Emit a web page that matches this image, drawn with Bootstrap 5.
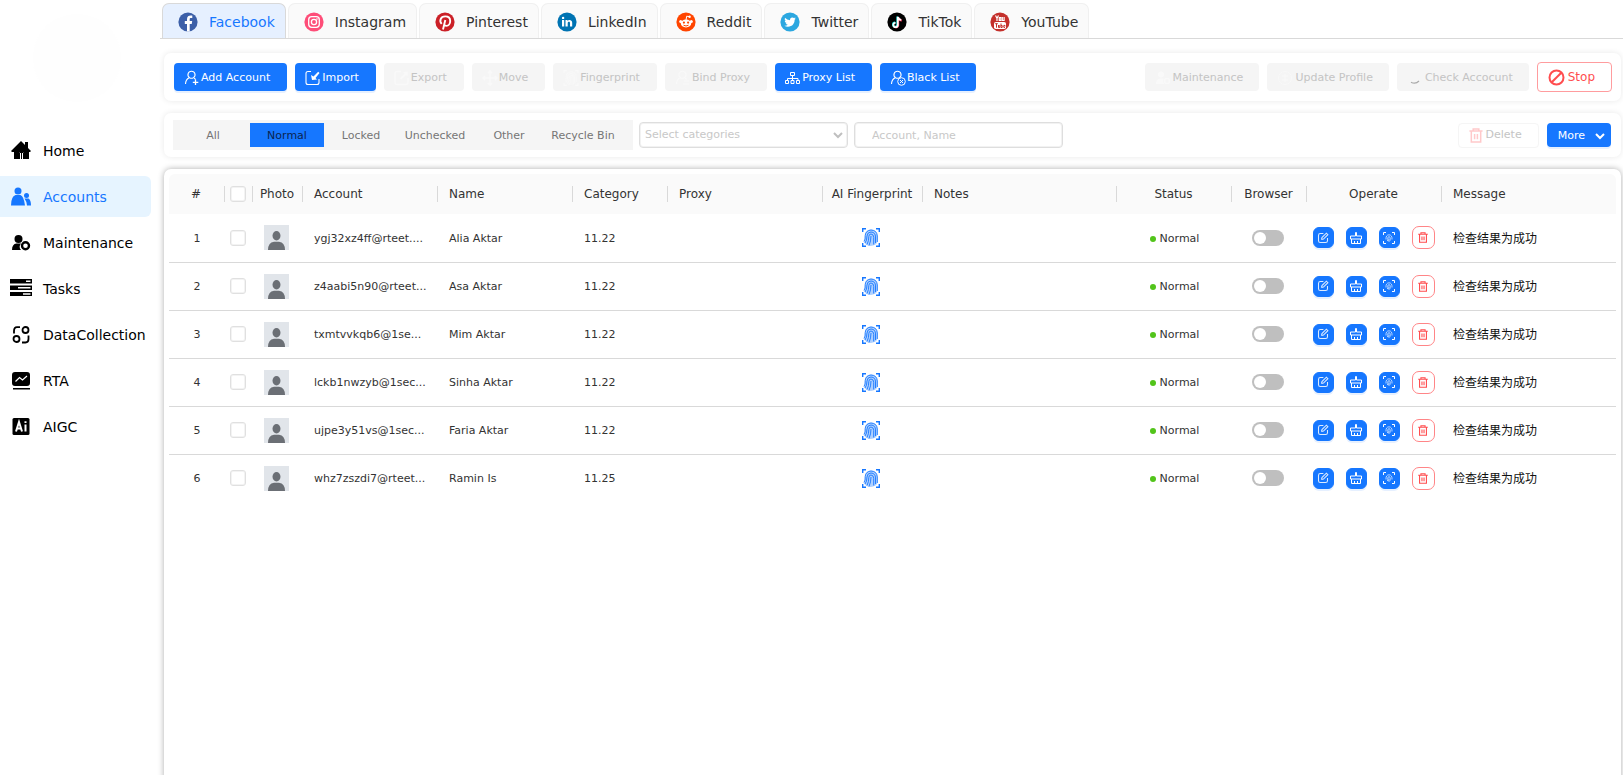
<!DOCTYPE html>
<html lang="en">
<head>
<meta charset="utf-8">
<meta name="viewport" content="width=device-width, initial-scale=1">
<title>Accounts</title>
<link rel="stylesheet" href="https://cdn.jsdelivr.net/npm/bootstrap@5.3.0/dist/css/bootstrap.min.css">
<style>
:root { --blue: #1677ff; }
body { font-family: "DejaVu Sans", "Noto Sans CJK SC", sans-serif; font-size: 11px; line-height: 16px; color: #333; background: #fff; }
svg { display: block; flex: none; }
.side { width: 160px; flex: none; }
.avatar-blank { width: 88px; height: 88px; margin: 14px 0 28px 33px; border-radius: 50%; background: #fefefe; }
.side-link { height: 41px; width: 151px; padding-left: 10px; gap: 11px; border-radius: 0 6px 6px 0; color: #000; font-size: 14px; text-decoration: none; white-space: nowrap; }
.side-link.active { background: #e6f4ff; color: var(--blue); }
.side-nav { gap: 5px; }
.content-col { min-width: 0; }
.site-tabs { padding: 3px 2px 0; border-bottom: 1px solid #d9d9d9; gap: 2px; }
.site-tabs .nav-link { height: 35px; padding: 2px 10px 0 15px; gap: 11px; border: 1px solid #f0f0f0; border-bottom: 0; border-radius: 7px 7px 0 0; background: #fafafa; color: #333; font-size: 14px; }
.site-tabs .nav-link.active { background: #e6f0ff; border-color: #d9d9d9; color: var(--blue); }
.main-area { padding: 14px 2px 0 4px; gap: 12px; }
.panel { background: #fff; border-radius: 7px; box-shadow: 0 0 6px rgba(0,0,0,.09); }
.panel-tools { padding: 9px 9px 9px 10px; }
.panel-filter { padding: 7px 10px 7px 9px; }
.panel-grid { box-shadow: 0 0 6px rgba(0,0,0,.32); padding: 5px 5px 0; margin-bottom: -10px; }
.tool { height: 28px; padding: 1px 17px 0 10px; gap: 1px; border: 0; border-radius: 4px; font-size: 11px; line-height: 16px; white-space: nowrap; display: flex; align-items: center; }
.tool.btn-primary, .mini.btn-primary { background: var(--blue); border-color: var(--blue); box-shadow: 0 2px 0 #e6f0ff; }
.tool:disabled { background: #f5f5f5; color: #c4c4c4; opacity: 1; }
.tool:disabled svg { color: #f9f9f9; }
.tool .spin { color: #aaa !important; }
.tool-wide { padding-right: 16px; gap: 2px; }
.tool-stop { height: 30px; padding: 0 16px 0 10px; gap: 3px; border: 1px solid #ff9c9e; border-color: #ff9c9e; color: #ff4d4f; font-size: 12px; }
.tool-del:disabled { height: 25px; padding: 0 16px 0 9px; background: #fff; border: 1px solid #f5f5f5; gap: 2px; }
.tool-del:disabled svg { color: #ffc9ca; }
.tool-more { height: 24px; padding: 1px 6px 0 11px; gap: 10px; }
.seg { background: #f5f5f5; padding: 3px 13px 3px 3px; }
.seg label { width: 74px; height: 24px; padding-top: 1px; line-height: 23px; text-align: center; color: #757575; white-space: nowrap; }
.seg .btn-check:checked + label { background: var(--blue); color: #0a2450; }
.fields { gap: 6px; margin-left: 6px; }
.field { width: 209px; height: 26px; border: 1px solid #dedede; border-radius: 4px; box-shadow: inset 0 0 0 1px #f2f2f2; font-size: 11px; line-height: 16px; padding: 0 17px; color: #c8c8c8; background-color: #fff; }
.field::placeholder { color: #c8c8c8; }
select.field { padding: 0 20px 0 5px; background-size: 10px 10px; background-position: right 4px center; background-image: url("data:image/svg+xml,%3csvg xmlns='http://www.w3.org/2000/svg' viewBox='0 0 10 10'%3e%3cpath fill='none' stroke='%23bfbfbf' stroke-width='2' d='M1 3l4 4 4-4'/%3e%3c/svg%3e"); }
.grid { table-layout: fixed; width: 100%; min-width: 1300px; }
.grid th { height: 40px; padding: 0; background: #fafafa; font-size: 12px; font-weight: 400; white-space: nowrap; }
.grid th:first-child { border-radius: 6px 0 0 0; }
.grid th:last-child { border-radius: 0 6px 0 0; }
.grid th > div { height: 16px; line-height: 16px; padding-right: 1px; border-right: 1px solid #d9d9d9; display: flex; justify-content: center; align-items: center; }
.grid th.first-left > div { justify-content: flex-start; padding-left: 11px; }
.grid th:last-child > div { border: 0; }
.grid td { height: 48px; padding: 2px 0 0; border-bottom: 1px solid #d9d9d9; white-space: nowrap; }
.grid tr:last-child td { border-bottom: 0; }
.grid td.txt { padding-left: 11px; }
.grid td.mid { padding: 0 4px 0 0; }
.grid td.mid-sm { padding: 0 2px 0 0; }
.grid td.msg { padding: 0 0 0 11px; font-family: "Noto Sans CJK SC", sans-serif; font-size: 12px; color: #111; }
.pick { width: 16px; height: 16px; margin: 0; border: 1px solid #e0e0e0; display: block; box-shadow: inset 0 0 0 1px #f3f3f3; }
.pick.form-check-input[type=checkbox] { border-radius: 3px; }
.photo { color: #6b6f75; }
.finger { color: var(--blue); }
.dot { width: 6px; height: 6px; border-radius: 50%; background: #52c41a; }
.toggle.form-check-input { width: 32px; height: 16px; margin: 0; border: 0; background-color: #bfbfbf; --bs-form-switch-bg: url("data:image/svg+xml,%3csvg xmlns='http://www.w3.org/2000/svg' viewBox='-8 -8 16 16'%3e%3ccircle r='6' fill='%23fff'/%3e%3c/svg%3e"); background-image: var(--bs-form-switch-bg); background-size: 16px 16px; }
.mini { width: 21px; height: 21px; padding: 0; border-radius: 6px; display: flex; align-items: center; justify-content: center; }
.mini-del { width: 23px; height: 23px; border: 1px solid #ff8587; color: #ff4d4f; border-radius: 7px; }
.ops { gap: 12px; }
</style>
</head>
<body>
<svg width="0" height="0" class="position-absolute" aria-hidden="true">
  <defs>
  <symbol id="i-finger" viewBox="0 0 18 19"><g fill="none" stroke="currentColor"><path stroke-width="1.4" d="M.7 4V.7H4M14 .7h3.300V4M17.300 15v3.300H14M4 18.300H.7V15"/><path fill="currentColor" fill-opacity=".35" stroke="none" d="M2 14q1-2 1-6 0-6 6-6.500 6 0 6.500 6.500v5q0 4-6.500 5-5 0-7-4"/><path stroke-width=".9" d="M2 13.500q1.500-2 1.200-6 .4-5 5.800-5.500 6 .3 6.300 6V14M3 15q2-2.500 2-7 .3-4 4-4 4.500.3 4.500 5V15M5 16.500q2-4 1.800-8Q7 6 9 6q2.700.2 2.700 3.500v7M7 17.500q2-4.500 2-9.500"/></g></symbol>
  <symbol id="i-scan" viewBox="0 0 12 12"><path fill="none" stroke="currentColor" d="M.5 3V.5H3M9 .5h2.500V3M11.500 9v2.500H9M3 11.500H.5V9"/><path fill="none" stroke="currentColor" stroke-opacity=".75" stroke-width=".9" d="M3 7.500q-.3-4.500 3-4.700 3.300.2 3 4.700M4.400 9q.6-1.500.4-3Q5 4.600 6 4.600q1.400.2 1.300 2Q7.200 8.500 6.500 9.500M6 6.500q0 1.500-.6 3"/></symbol>
  <symbol id="i-trash" viewBox="0 0 14 16"><path fill="none" stroke="currentColor" stroke-width="1.600" d="M0 3.300h14M4 3V1h6v2M2 3.500V15h10V3.500M5.500 6.500V12M8.500 6.500V12"/></symbol>
  <symbol id="i-edit" viewBox="0 0 16 16"><path fill="none" stroke="currentColor" stroke-opacity=".85" stroke-width="1.400" d="M8.500 2H4.500A2.500 2.500 0 0 0 2 4.500v7A2.500 2.500 0 0 0 4.500 14h7a2.500 2.500 0 0 0 2.500-2.500V8M6 10l.6-2.600L12.500 1.500l2 2L8.600 9.400 6 10"/></symbol>
  <symbol id="i-brush" viewBox="0 0 12 12"><path fill="none" stroke="currentColor" d="M5.500 4V.5h1V4h5v3H.5V4zM1.500 7v4.500h9V7M4.500 9v2.500M7.500 9v2.500"/></symbol>
  <symbol id="i-user" viewBox="0 0 16 16"><path fill="none" stroke="currentColor" stroke-width="1.100" d="M7.500 1.200a3.500 3.500 0 0 1 2 6.400q-.8.700-2 .7-1.200 0-2-.7a3.500 3.500 0 0 1 2-6.400M5.200 7.800Q1.700 9.500 1.500 14M10 8.300q1 .4 1.600 1.200"/></symbol>
  </defs>
</svg>
<div class="d-flex min-vh-100">
  <aside class="side">
    <div class="avatar-blank"></div>
    <nav class="side-nav d-flex flex-column" aria-label="Main">
      <a class="side-link d-flex align-items-center" href="#"><svg width="22" height="20" viewBox="0 0 22 20"><path fill="currentColor" d="M11 0l4 4V1h3v6l3 3-1 1h-1v7h-5v-7H9v7H4v-7H2l-1-1z"/><path fill="none" stroke="currentColor" d="M9.500 18v-6.500h4V18M11.500 12v6"/></svg>Home</a>
      <a class="side-link active d-flex align-items-center" href="#" aria-current="page"><svg width="22" height="20" viewBox="0 0 22 20"><g fill="currentColor"><circle cx="8" cy="4" r="3.500"/><circle cx="16.500" cy="8.500" r="2.500"/><path d="M1 18.500q0-9 4.500-10.500h5Q14 9.500 15 18.500zM14.500 11.500h4q2.500 1.500 2.500 7h-4q-.3-4-2.500-7"/></g></svg>Accounts</a>
      <a class="side-link d-flex align-items-center" href="#"><svg width="22" height="20" viewBox="0 0 22 20"><g fill="currentColor"><circle cx="8.500" cy="6" r="4"/><path d="M2 17q0-6 4.500-6.500h4.500a5 5 0 0 0 0 6.500z"/></g><circle cx="15.500" cy="12.800" r="3.500" fill="none" stroke="currentColor" stroke-width="2.400"/></svg>Maintenance</a>
      <a class="side-link d-flex align-items-center" href="#"><svg width="22" height="20" viewBox="0 0 22 20"><path fill="currentColor" d="M0 0h22v4.500H0zM0 6.500h22V11H0zM0 13h22v4H0z"/><path stroke="#fff" stroke-width="1.500" d="M16 2.200h4.500M8 8.700h12.500M13 15h7.500"/></svg>Tasks</a>
      <a class="side-link d-flex align-items-center" href="#"><svg width="22" height="20" viewBox="0 0 22 20"><g fill="none" stroke="currentColor" stroke-width="1.800"><circle cx="15.500" cy="5" r="3"/><circle cx="6.500" cy="14" r="3"/><path d="M4 8.500V6q0-3.800 3-3.800h3M18.500 10.500V14q0 3.500-3 3.500H12"/></g></svg>DataCollection</a>
      <a class="side-link d-flex align-items-center" href="#"><svg width="22" height="20" viewBox="0 0 22 20"><path fill="currentColor" d="M5 1h12q3 0 3 3v8q0 3-3 3H5q-3 0-3-3V4q0-3 3-3M3 17h17v1.500H3z"/><path fill="none" stroke="#fff" stroke-width="1.200" d="M5.500 10.500l4-4 3 2.500 4.500-4"/></svg>RTA</a>
      <a class="side-link d-flex align-items-center" href="#"><svg width="22" height="20" viewBox="0 0 22 20"><rect x="2.500" y="1" width="17" height="17" rx="1.500" fill="currentColor"/><path fill="none" stroke="#fff" stroke-width="2" d="M6 14.500l3-9.500 3 9.500M7 11.500h4M15.500 7.500v7M15.500 4.300v1.800"/></svg>AIGC</a>
    </nav>
  </aside>
  <div class="content-col flex-grow-1 d-flex flex-column">
    <nav class="site-tabs nav flex-nowrap" aria-label="Platforms">
      <a class="nav-link active d-flex align-items-center" href="#"><svg width="20" height="20" viewBox="0 0 20 20"><circle cx="10" cy="10" r="9.600" fill="#3c5fa8"/><path fill="#fff" d="M9 19.500V12H6.800V9H9V7.200C9 4.500 10.600 3.500 12.700 3.500c.8 0 1.600.1 1.600.1v2.500H13c-1 0-1.300.5-1.300 1.300V9h2.500l-.5 3h-2v7.500z"/></svg>Facebook</a>
      <a class="nav-link d-flex align-items-center" href="#"><svg width="20" height="20" viewBox="0 0 20 20"><circle cx="10" cy="10" r="9.600" fill="#fe4d78"/><g fill="none" stroke="#fff" stroke-width="1.300"><rect x="4.700" y="4.700" width="10.600" height="10.600" rx="3"/><circle cx="10" cy="10" r="2.600"/></g><circle cx="13" cy="7" r=".8" fill="#fff"/></svg>Instagram</a>
      <a class="nav-link d-flex align-items-center" href="#"><svg width="20" height="20" viewBox="0 0 20 20"><circle cx="10" cy="10" r="9.600" fill="#cb2027"/><path fill="none" stroke="#fff" stroke-width="1.900" d="M6.700 11.800C4 9 5.500 4.400 10.200 4.400c3.300 0 5 2 5 4.500 0 3-1.700 5-3.800 5-1.300 0-2-.7-2.200-1.200M10.300 8L8 17.500"/></svg>Pinterest</a>
      <a class="nav-link d-flex align-items-center" href="#"><svg width="20" height="20" viewBox="0 0 20 20"><circle cx="10" cy="10" r="9.600" fill="#0073b2"/><path fill="#fff" d="M5 8h2.200v6.500H5zM8.500 8h2v1c1-1.700 4.700-1.600 4.700 1.700v3.800H13v-3.400c0-2-2.300-1.700-2.300 0v3.400H8.500z"/><circle cx="6.100" cy="5.900" r="1.200" fill="#fff"/></svg>LinkedIn</a>
      <a class="nav-link d-flex align-items-center" href="#"><svg width="20" height="20" viewBox="0 0 20 20"><circle cx="10" cy="10" r="9.600" fill="#ff4500"/><g fill="#fff"><ellipse cx="10" cy="11.500" rx="5.200" ry="3.900"/><circle cx="4.700" cy="9.500" r="1.500"/><circle cx="15.300" cy="9.500" r="1.500"/><circle cx="13.600" cy="4.800" r="1.200"/></g><path fill="none" stroke="#fff" d="M10 8l.7-3.800 2.900.6"/><path fill="none" stroke="#ff4500" d="M7.500 13.200q2.500 1.600 5 0"/><g fill="#ff4500"><circle cx="7.900" cy="10.600" r="1.100"/><circle cx="12.100" cy="10.600" r="1.100"/></g></svg>Reddit</a>
      <a class="nav-link d-flex align-items-center" href="#"><svg width="20" height="20" viewBox="0 0 20 20"><circle cx="10" cy="10" r="9.600" fill="#2ca7e0"/><path fill="#fff" d="M15.800 6.400q-.6.300-1.300.4.700-.5 1-1.300-.7.400-1.500.6a2.400 2.400 0 0 0-4 2.200Q7 8.100 5 5.800q-1 1.800.7 3.200-.5 0-1-.3 0 1.900 1.900 2.400-.5.100-1 0 .5 1.500 2.200 1.600-1.400 1.200-3.500 1 1.700 1 3.600 1c4.600 0 6.900-3.800 6.700-7q.7-.6 1.200-1.300"/></svg>Twitter</a>
      <a class="nav-link d-flex align-items-center" href="#"><svg width="20" height="20" viewBox="0 0 20 20"><circle cx="10" cy="10" r="9.600" fill="#000"/><g fill="none" stroke-width="1.800"><path stroke="#25f4ee" d="M10.300 4.500v8a2.200 2.200 0 1 1-2.200-2.200"/><path stroke="#fe2c55" d="M11.300 5.500v8a2.200 2.200 0 0 1-4 1M11.500 5.500q.5 2.800 3.300 3"/><path stroke="#fff" d="M10.800 4.700V13a2.200 2.200 0 1 1-2.200-2.200M10.800 5q.5 2.700 3.400 2.900"/></g></svg>TikTok</a>
      <a class="nav-link d-flex align-items-center" href="#"><svg width="20" height="20" viewBox="0 0 20 20"><circle cx="10" cy="10" r="9.600" fill="#c4302b"/><rect x="4" y="10" width="12" height="7" rx="1.800" fill="#fff"/><path fill="none" stroke="#fff" stroke-width="1.200" d="M5.500 3.500L7 6.200l1.500-2.700M7 6v3M9.300 5.500h1.500v3H9.300zM12.300 5v3.500h1.800V5"/><path fill="none" stroke="#c4302b" d="M5.200 11.700h2.600M6.500 11.700v4M8.500 13v2.500h1.300V13M11 11.500v4h1.200v-2H11M15 15.400h-1.200v-2H15v1"/></svg>YouTube</a>
    </nav>
    <main class="main-area flex-grow-1 d-flex flex-column">
      <section class="panel panel-tools d-flex flex-wrap align-items-center gap-2">
        <button class="tool btn btn-primary" type="button"><svg width="16" height="16" viewBox="0 0 16 16"><use href="#i-user"/><path stroke="currentColor" stroke-width="1.300" d="M11.500 9.500v5.500M8.800 12.300h5.500"/></svg>Add Account</button>
        <button class="tool btn btn-primary" type="button"><svg width="16" height="16" viewBox="0 0 16 16"><path fill="none" stroke="currentColor" stroke-width="1.100" d="M6 1.500H3q-2 0-2 2v9q0 2 2 2h9q2 0 2-2V9"/><path fill="currentColor" d="M6 5l1 5 5-.5-1.500-1.500L14.500 3l-1.300-1.300L8.500 6.500z"/></svg>Import</button>
        <button class="tool btn" type="button" disabled><svg width="16" height="16" viewBox="0 0 16 16"><path fill="none" stroke="currentColor" stroke-width="1.300" d="M7 1.500H3q-2 0-2 2v9q0 2 2 2h9q2 0 2-2V8"/><path fill="currentColor" d="M14 1.500l-5 .5 1.500 1.500L6 8l1.300 1.500L12 5l1.500 1.500z"/></svg>Export</button>
        <button class="tool btn" type="button" disabled><svg width="16" height="16" viewBox="0 0 16 16"><path fill="none" stroke="currentColor" stroke-width="1.500" d="M8 1v14M1 8h14M6 3l2-2 2 2M6 13l2 2 2-2M3 6L1 8l2 2M13 6l2 2-2 2"/></svg>Move</button>
        <button class="tool btn" type="button" disabled><svg width="16" height="16"><use href="#i-finger"/></svg>Fingerprint</button>
        <button class="tool btn" type="button" disabled><svg width="16" height="16" viewBox="0 0 16 16"><use href="#i-user"/><path stroke="currentColor" d="M8 14h6M9 11h5"/></svg>Bind Proxy</button>
        <button class="tool btn btn-primary" type="button"><svg width="16" height="16" viewBox="0 0 16 16"><path fill="none" stroke="currentColor" d="M5.500 2.500h4v3h-4zM.5 10.500h3v3h-3zM6 10.500h3v3H6zM11.500 10.500h3v3h-3zM7.500 5.500v5M2.500 10.500v-2h10.500v2"/></svg>Proxy List</button>
        <button class="tool btn btn-primary" type="button"><svg width="16" height="16" viewBox="0 0 16 16"><use href="#i-user"/><circle cx="11.500" cy="11.500" r="3.800" fill="#1677ff" stroke="currentColor"/><path stroke="currentColor" d="M10 10l3 3M13 10l-3 3"/></svg>Black List</button>
        <div class="ms-auto d-flex align-items-center gap-2">
          <button class="tool tool-wide btn" type="button" disabled><svg width="16" height="16" viewBox="0 0 16 16"><g fill="currentColor"><circle cx="6" cy="4.500" r="3"/><path d="M1 14q0-5 4-5.500h3.500q-1 3 .5 5.500z"/></g><circle cx="12" cy="11" r="2.500" fill="none" stroke="currentColor" stroke-width="1.500"/></svg>Maintenance</button>
          <button class="tool tool-wide btn" type="button" disabled><svg width="16" height="16" viewBox="0 0 16 16"><g fill="none" stroke="currentColor"><circle cx="8" cy="8" r="6.500"/><path d="M8 4v8M5 6h6M5 10h6"/></g></svg>Update Profile</button>
          <button class="tool tool-wide btn" type="button" disabled><svg class="spin" width="16" height="16" viewBox="0 0 16 16"><path fill="none" stroke="currentColor" stroke-width="1.200" d="M4 12.200q4.500 2.500 8-1.200"/></svg>Check Accocunt</button>
          <button class="tool tool-stop btn" type="button"><svg width="17" height="17" viewBox="0 0 17 17"><g fill="none" stroke="currentColor" stroke-width="2"><circle cx="8.500" cy="8.500" r="7"/><path d="M3.700 13.300l9.600-9.600"/></g></svg>Stop</button>
        </div>
      </section>
      <section class="panel panel-filter d-flex flex-wrap align-items-center">
        <div class="seg d-flex" role="group" aria-label="Account state">
          <input class="btn-check" type="radio" name="state" id="s1"><label for="s1">All</label>
          <input class="btn-check" type="radio" name="state" id="s2" checked><label for="s2">Normal</label>
          <input class="btn-check" type="radio" name="state" id="s3"><label for="s3">Locked</label>
          <input class="btn-check" type="radio" name="state" id="s4"><label for="s4">Unchecked</label>
          <input class="btn-check" type="radio" name="state" id="s5"><label for="s5">Other</label>
          <input class="btn-check" type="radio" name="state" id="s6"><label for="s6">Recycle Bin</label>
        </div>
        <div class="fields d-flex">
          <select class="field form-select" aria-label="Categories"><option>Select categories</option></select>
          <input class="field form-control" type="text" placeholder="Account, Name" aria-label="Account, Name">
        </div>
        <div class="ms-auto d-flex align-items-center gap-2">
          <button class="tool tool-del btn" type="button" disabled><svg width="16" height="15"><use href="#i-trash"/></svg>Delete</button>
          <button class="tool tool-more btn btn-primary" type="button">More<svg width="10" height="10" viewBox="0 0 10 10"><path fill="none" stroke="currentColor" stroke-width="2" d="M1 3l4 4 4-4"/></svg></button>
        </div>
      </section>
      <section class="panel panel-grid flex-grow-1">
        <table class="grid">
          <colgroup><col style="width:56px"><col style="width:28px"><col style="width:50px"><col style="width:135px"><col style="width:135px"><col style="width:95px"><col style="width:155px"><col style="width:100px"><col style="width:194px"><col style="width:115px"><col style="width:75px"><col style="width:135px"><col></colgroup>
          <thead><tr>
            <th><div>#</div></th>
            <th><div><input class="pick form-check-input" type="checkbox" aria-label="Select all"></div></th>
            <th><div>Photo</div></th>
            <th class="first-left"><div>Account</div></th>
            <th class="first-left"><div>Name</div></th>
            <th class="first-left"><div>Category</div></th>
            <th class="first-left"><div>Proxy</div></th>
            <th><div>AI Fingerprint</div></th>
            <th class="first-left"><div>Notes</div></th>
            <th><div>Status</div></th>
            <th><div>Browser</div></th>
            <th><div>Operate</div></th>
            <th class="first-left"><div>Message</div></th>
          </tr></thead>
          <tbody id="rows"></tbody>
        </table>
      </section>
    </main>
  </div>
</div>
<script src="https://cdn.jsdelivr.net/npm/bootstrap@5.3.0/dist/js/bootstrap.bundle.min.js"></script>
<script>
const accounts = [
  ["ygj32xz4ff@rteet....", "Alia Aktar", "11.22"],
  ["z4aabi5n90@rteet...", "Asa Aktar", "11.22"],
  ["txmtvvkqb6@1se...", "Mim Aktar", "11.22"],
  ["lckb1nwzyb@1sec...", "Sinha Aktar", "11.22"],
  ["ujpe3y51vs@1sec...", "Faria Aktar", "11.22"],
  ["whz7zszdi7@rteet...", "Ramin Is", "11.25"]
];
document.getElementById("rows").innerHTML = accounts.map(([account, name, category], i) => `
  <tr>
    <td class="text-center">${i + 1}</td>
    <td class="mid-sm"><div class="d-flex justify-content-center"><input class="pick form-check-input" type="checkbox" aria-label="Select ${name}"></div></td>
    <td class="mid"><svg class="photo mx-auto" width="25" height="25" viewBox="0 0 25 25"><path fill="#e1e5ea" d="M0 0h25v25H0z"/><g fill="currentColor"><ellipse cx="12.500" cy="10.800" rx="4" ry="4.700"/><path d="M4 25q0-7.500 6-8.300h5q6 .8 6 8.300z"/></g></svg></td>
    <td class="txt">${account}</td>
    <td class="txt">${name}</td>
    <td class="txt">${category}</td>
    <td></td>
    <td class="mid"><svg class="finger mx-auto" width="18" height="19"><use href="#i-finger"/></svg></td>
    <td></td>
    <td><div class="d-flex align-items-center justify-content-center gap-1"><span class="dot"></span>Normal</div></td>
    <td class="mid"><div class="form-switch d-flex justify-content-center p-0"><input class="toggle form-check-input" type="checkbox" role="switch" aria-label="Browser for ${name}"></div></td>
    <td class="mid-sm"><div class="ops d-flex align-items-center justify-content-center">
      <button class="mini btn btn-primary" type="button" aria-label="Edit"><svg width="12" height="12"><use href="#i-edit"/></svg></button>
      <button class="mini btn btn-primary" type="button" aria-label="Clean"><svg width="12" height="12"><use href="#i-brush"/></svg></button>
      <button class="mini btn btn-primary" type="button" aria-label="Fingerprint"><svg width="12" height="12"><use href="#i-scan"/></svg></button>
      <button class="mini mini-del btn" type="button" aria-label="Delete"><svg width="10" height="11"><use href="#i-trash"/></svg></button>
    </div></td>
    <td class="msg">检查结果为成功</td>
  </tr>`).join("");
</script>
</body>
</html>
